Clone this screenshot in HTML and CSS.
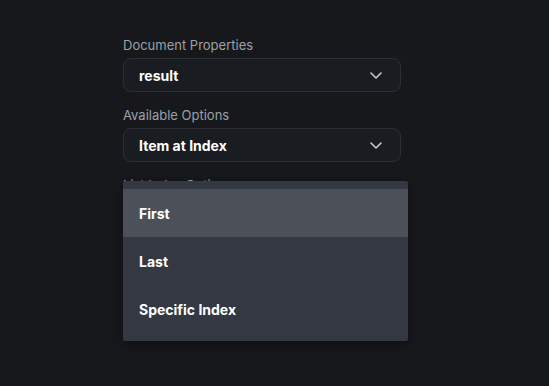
FILE: index.html
```html
<!DOCTYPE html>
<html lang="en">
<head>
  <meta charset="UTF-8">
  <title>Properties</title>
  <link rel="stylesheet" href="styles.css">
</head>
<body>
  <div class="panel">
    <div class="field">
      <label class="field-label">Document Properties</label>
      <div class="select">
        <span>result</span>
        <svg class="chevron" viewBox="0 0 14 14" width="14" height="14"><path d="M2 5l5 5 5-5" fill="none" stroke="#c9ccd1" stroke-width="1.6" stroke-linecap="round" stroke-linejoin="round"/></svg>
      </div>
    </div>
    <div class="field">
      <label class="field-label">Available Options</label>
      <div class="select">
        <span>Item at Index</span>
        <svg class="chevron" viewBox="0 0 14 14" width="14" height="14"><path d="M2 5l5 5 5-5" fill="none" stroke="#c9ccd1" stroke-width="1.6" stroke-linecap="round" stroke-linejoin="round"/></svg>
      </div>
    </div>
    <div class="field">
      <label class="field-label">List Index Options</label>
      <div class="menu">
        <div class="menu-item active">First</div>
        <div class="menu-item">Last</div>
        <div class="menu-item">Specific Index</div>
      </div>
    </div>
  </div>
</body>
</html>
```

FILE: styles.css
```css
body {
  margin: 0;
  padding: 0;
  background: #16181c;
  font-family: 'Inter', 'Liberation Sans', sans-serif;
  height: 100vh;
  overflow: hidden;
}
.panel {
  width: 278px;
  padding: 37px 0 0 123px;
}
.field {
  position: relative;
  margin-bottom: 15px;
}
.field-label {
  display: block;
  font-size: 13px;
  line-height: 16px;
  color: #9ca1a8;
  margin-bottom: 5px;
}
.select {
  height: 32px;
  border: 1px solid #2c2f35;
  border-radius: 8px;
  background: #191c20;
  display: flex;
  align-items: center;
  justify-content: space-between;
  padding: 0 17px 0 15px;
  color: #fff;
  font-size: 14px;
  font-weight: 700;
}
.chevron {
  display: block;
}
/* menu desplegado encima del campo */
.menu {
  position: absolute;
  top: 4px;
  left: 0;
  width: 285px;
  padding: 8px 0;
  background: #333842;
  box-shadow: 0 4px 12px rgba(0, 0, 0, 0.35);
  border-radius: 2px;
}
.menu-item {
  height: 48px;
  display: flex;
  align-items: center;
  padding-left: 16px;
  color: #fff;
  font-size: 14px;
  font-weight: 700;
}
.menu-item.active {
  background: #4b5059;
}
```
